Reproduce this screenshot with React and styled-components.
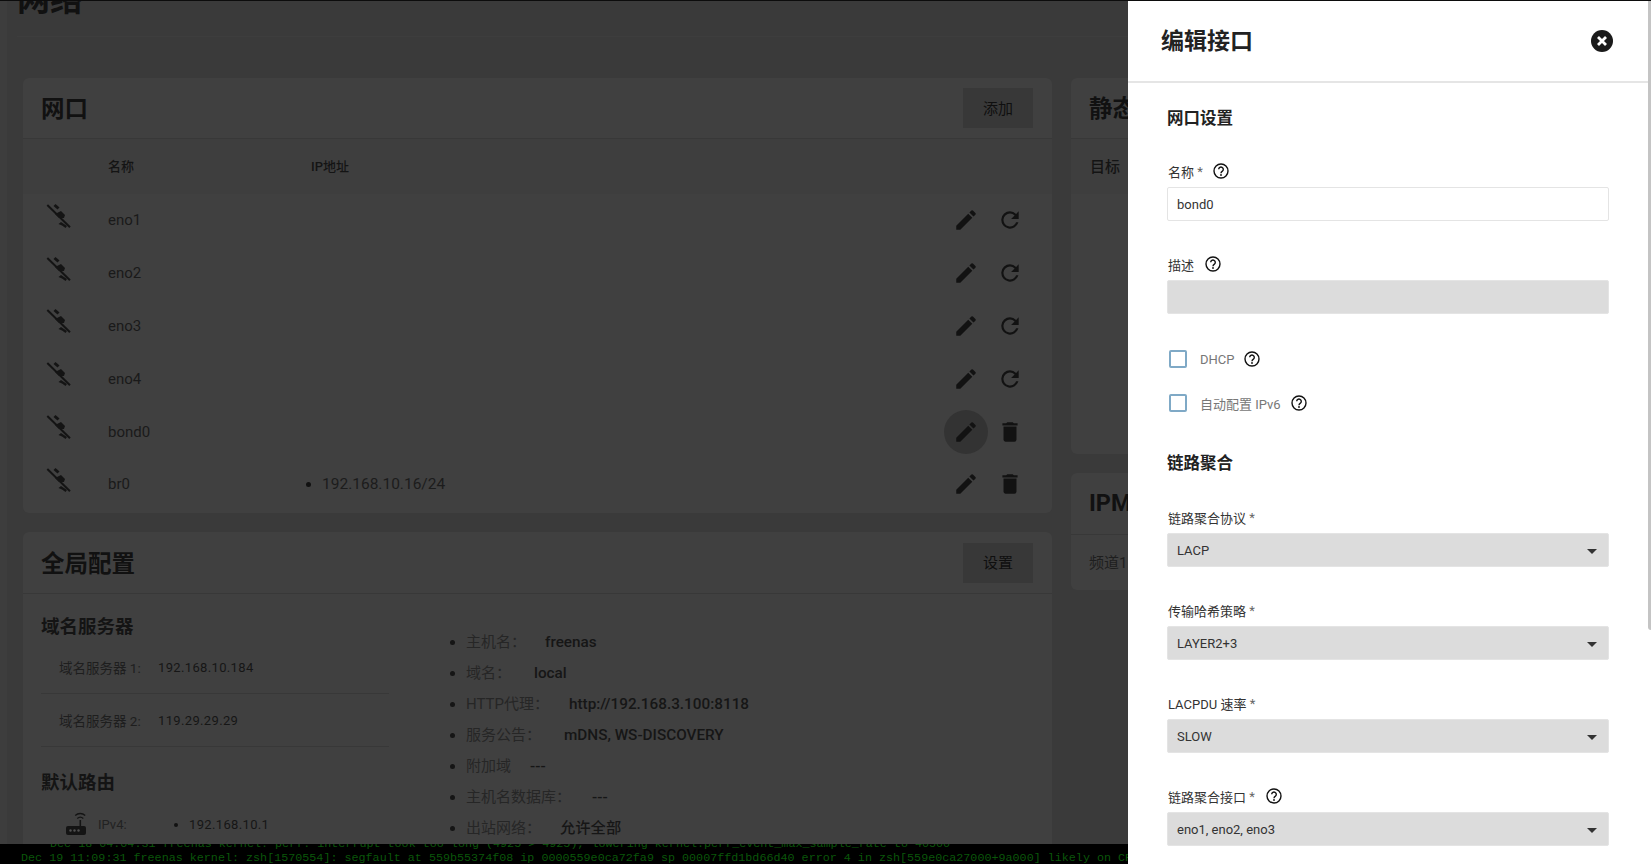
import React from "react";
import styled, { createGlobalStyle } from "styled-components";

const CN = `Roboto, "Noto Sans CJK SC", sans-serif`;

const interfaces = [
  { name: "eno1", action: "reset" },
  { name: "eno2", action: "reset" },
  { name: "eno3", action: "reset" },
  { name: "eno4", action: "reset" },
  { name: "bond0", action: "delete", hover: true },
  { name: "br0", action: "delete", ip: "192.168.10.16/24" },
];

const settings = [
  { label: "主机名：", value: "freenas", w: 79 },
  { label: "域名：", value: "local", w: 68 },
  { label: "HTTP代理：", value: "http://192.168.3.100:8118", w: 103 },
  { label: "服务公告：", value: "mDNS, WS-DISCOVERY", w: 98 },
  { label: "附加域", value: "---", w: 64 },
  { label: "主机名数据库：", value: "---", w: 126 },
  { label: "出站网络：", value: "允许全部", w: 94 },
];

const selects = [
  { label: "传输哈希策略", value: "LAYER2+3" },
  { label: "LACPDU 速率", value: "SLOW" },
  { label: "链路聚合接口", value: "eno1, eno2, eno3", help: true },
];

const Pencil = () => (
  <svg width="26" height="26" viewBox="0 0 24 24" fill="#121212">
    <path d="M3 17.25V21h3.75L17.81 9.94l-3.75-3.75L3 17.25zM20.71 7.04a1 1 0 0 0 0-1.41l-2.34-2.34a1 1 0 0 0-1.41 0l-1.83 1.83 3.75 3.75 1.83-1.83z" />
  </svg>
);
const Reset = () => (
  <svg width="26" height="26" viewBox="0 0 24 24" fill="#121212">
    <path d="M17.65 6.35A7.96 7.96 0 0 0 12 4a8 8 0 1 0 7.73 10h-2.08A6 6 0 1 1 12 6c1.66 0 3.14.69 4.22 1.78L13 11h7V4l-2.35 2.35z" />
  </svg>
);
const Trash = () => (
  <svg width="26" height="26" viewBox="0 0 24 24" fill="#121212">
    <path d="M6 19c0 1.1.9 2 2 2h8a2 2 0 0 0 2-2V7H6v12zM19 4h-3.500l-1-1h-5l-1 1H5v2h14V4z" />
  </svg>
);
const PlugOff = () => (
  <svg width="26" height="26" viewBox="0 0 26 26" fill="#141414">
    <path d="M1.300 2 24 24.300" stroke="#141414" strokeWidth="2" fill="none" />
    <path d="M7.500 3 9.500 1l4 3.500-2 2z" />
    <path d="M9 11l6-3 4 4-1 3h-5z" />
    <path d="M12.500 21 15 19l6 4-1.500 2-3.500-2.500z" />
  </svg>
);
const Router = () => (
  <svg width="22" height="24" viewBox="0 0 22 24" fill="#141414">
    <rect x="1" y="14" width="20" height="9" rx="2" />
    <rect x="14.500" y="8" width="1.600" height="6" />
    <circle cx="5.500" cy="18.500" r="1.200" fill="#505050" />
    <circle cx="9.500" cy="18.500" r="1.200" fill="#505050" />
    <circle cx="13.500" cy="18.500" r="1.200" fill="#505050" />
    <path d="M12.300 6.400a4.500 4.500 0 0 1 6 0M10.200 3.400a7.500 7.500 0 0 1 10 0" fill="none" stroke="#141414" strokeWidth="1.300" />
  </svg>
);
const Help = () => (
  <svg width="16" height="16" viewBox="0 0 16 16">
    <circle cx="8" cy="8" r="7" fill="none" stroke="#111" strokeWidth="1.400" />
    <path d="M5.700 6.300a2.300 2.300 0 1 1 3.700 1.900c-.9.600-1.400 1-1.400 2.100" fill="none" stroke="#111" strokeWidth="1.400" />
    <circle cx="8" cy="12" r=".9" fill="#111" />
  </svg>
);
const CloseCircle = () => (
  <svg width="22" height="22" viewBox="0 0 22 22">
    <circle cx="11" cy="11" r="11" fill="#1a1a1a" />
    <path d="M7 7l8 8M15 7l-8 8" stroke="#fff" strokeWidth="2.800" />
  </svg>
);

const Select = ({ label, value, help, top }) => (
  <Field $top={top}>
    <Label>
      {label} <Star>*</Star>
      {help && <HelpSlot $gap={11}><Help /></HelpSlot>}
    </Label>
    <SelectBox>
      {value}
      <Caret />
    </SelectBox>
  </Field>
);

export default function App() {
  return (
    <Shell>
      <GlobalStyle />
      <Page>
        <Rail />
        <Main>
          <PageTitle>网络</PageTitle>
          <Columns>
            <LeftColumn>
              <Card $h={435}>
                <CardHeader>
                  <CardTitle>网口</CardTitle>
                  <ActionButton>添加</ActionButton>
                </CardHeader>
                <TableHead>
                  <HeadCell $w={85} />
                  <HeadCell $w={203}>名称</HeadCell>
                  <HeadCell>IP地址</HeadCell>
                </TableHead>
                {interfaces.map(row => (
                  <Row key={row.name}>
                    <StateIcon><PlugOff /></StateIcon>
                    <NameCell>{row.name}</NameCell>
                    <IpCell>{row.ip && <IpItem>{row.ip}</IpItem>}</IpCell>
                    <RowActions>
                      <IconButton $hover={row.hover}><Pencil /></IconButton>
                      <IconButton>{row.action === "reset" ? <Reset /> : <Trash />}</IconButton>
                    </RowActions>
                  </Row>
                ))}
              </Card>
              <Card $h={320}>
                <CardHeader $h={62}>
                  <CardTitle>全局配置</CardTitle>
                  <ActionButton>设置</ActionButton>
                </CardHeader>
                <ConfigBody>
                  <ConfigLeft>
                    <SubTitle>域名服务器</SubTitle>
                    <DnsRow><DnsLabel>域名服务器 1:</DnsLabel><DnsValue>192.168.10.184</DnsValue></DnsRow>
                    <DnsRow><DnsLabel>域名服务器 2:</DnsLabel><DnsValue>119.29.29.29</DnsValue></DnsRow>
                    <SubTitle $top={23}>默认路由</SubTitle>
                    <RouteRow>
                      <Router />
                      <RouteLabel>IPv4:</RouteLabel>
                      <RouteValue>192.168.10.1</RouteValue>
                    </RouteRow>
                  </ConfigLeft>
                  <ConfigList>
                    {settings.map(s => (
                      <ConfigItem key={s.label}>
                        <ConfigLabel $w={s.w}>{s.label}</ConfigLabel>
                        <ConfigValue>{s.value}</ConfigValue>
                      </ConfigItem>
                    ))}
                  </ConfigList>
                </ConfigBody>
              </Card>
            </LeftColumn>
            <RightColumn>
              <Card $h={376}>
                <CardHeader>
                  <CardTitle>静态路由</CardTitle>
                </CardHeader>
                <TableHead>
                  <HeadCell $w={19} />
                  <HeadCell $size={15}>目标</HeadCell>
                </TableHead>
              </Card>
              <Card $h={117}>
                <CardHeader $h={62}>
                  <CardTitle>IPMI</CardTitle>
                </CardHeader>
                <ChannelRow>频道1</ChannelRow>
              </Card>
            </RightColumn>
          </Columns>
        </Main>
      </Page>
      <Terminal>
        <TermLine $indent={29}>Dec 18 04:04:31 freenas kernel: perf: interrupt took too long (4925 &gt; 4925), lowering kernel.perf_event_max_sample_rate to 40500</TermLine>
        <TermLine>Dec 19 11:09:31 freenas kernel: zsh[1570554]: segfault at 559b55374f08 ip 0000559e0ca72fa9 sp 00007ffd1bd66d40 error 4 in zsh[559e0ca27000+9a000] likely on CPU</TermLine>
      </Terminal>

      <Panel>
        <PanelHeader>
          <PanelTitle>编辑接口</PanelTitle>
          <CloseCircle />
        </PanelHeader>
        <PanelBody>
          <SectionTitle>网口设置</SectionTitle>
          <Field $top={32}>
            <Label>名称<Star> *</Star><HelpSlot $gap={10}><Help /></HelpSlot></Label>
            <TextInput>bond0</TextInput>
          </Field>
          <Field $top={35}>
            <Label>描述<HelpSlot $gap={11}><Help /></HelpSlot></Label>
            <DisabledInput />
          </Field>
          <CheckRow $top={36}>
            <CheckBox />
            <CheckText>DHCP</CheckText>
            <HelpSlot $gap={10}><Help /></HelpSlot>
          </CheckRow>
          <CheckRow $top={26}>
            <CheckBox />
            <CheckText>自动配置 IPv6</CheckText>
            <HelpSlot $gap={10}><Help /></HelpSlot>
          </CheckRow>
          <SectionTitle $top={40}>链路聚合</SectionTitle>
          <Select label="链路聚合协议" value="LACP" top={33} />
          {selects.map(s => (
            <Select key={s.label} label={s.label} value={s.value} help={s.help} top={35} />
          ))}
        </PanelBody>
        <ScrollThumb />
      </Panel>
    </Shell>
  );
}

// styled-components
const GlobalStyle = createGlobalStyle`
  html, body {
    margin: 0;
    height: 100%;
    overflow: hidden;
  }
  body {
    font-family: ${CN};
    background: #000;
  }
`;
const Shell = styled.div`
  position: relative;
  display: flex;
  flex-direction: column;
  height: 864px;
  overflow: hidden;
  border-top: 1px solid #0c0c0c;
  box-sizing: border-box;
`;
const Page = styled.div`
  flex: 1;
  display: flex;
  min-height: 0;
  overflow: hidden;
  background: #3a3a3a;
`;
const Rail = styled.div`
  width: 7px;
  flex-shrink: 0;
  background: #3d3d3d;
`;
const Main = styled.div`
  flex: 1;
  padding: 0 0 0 16px;
  min-width: 0;
`;
const PageTitle = styled.h1`
  box-sizing: border-box;
  height: 56px;
  margin: -20px 0 41px -6px;
  font-size: 33px;
  line-height: 38px;
  font-weight: 700;
  color: #111;
  border-bottom: 1px solid #3d3d3d;
`;
const Columns = styled.div`
  display: flex;
  gap: 19px;
`;
const LeftColumn = styled.div`
  width: 1029px;
  flex-shrink: 0;
  display: flex;
  flex-direction: column;
  gap: 19px;
`;
const RightColumn = styled.div`
  flex: 1;
  display: flex;
  flex-direction: column;
  gap: 19px;
`;
const Card = styled.section`
  height: ${props => props.$h}px;
  flex-shrink: 0;
  background: #404040;
  border-radius: 6px;
  overflow: hidden;
`;
const CardHeader = styled.header`
  display: flex;
  align-items: center;
  justify-content: space-between;
  box-sizing: border-box;
  height: ${props => props.$h || 61}px;
  padding: 0 19px 0 18px;
  border-bottom: 1px solid #383838;
`;
const CardTitle = styled.h2`
  margin: 0 0 2px;
  font-size: 23.5px;
  font-weight: 700;
  color: #111;
  white-space: nowrap;
`;
const ActionButton = styled.button`
  width: 70px;
  height: 40px;
  border: 0;
  border-radius: 0;
  background: #383838;
  color: #0f0f0f;
  font-family: ${CN};
  font-size: 15px;
  padding: 0 0 2px;
`;
const TableHead = styled.div`
  display: flex;
  align-items: center;
  height: 55px;
  padding-bottom: 2px;
  box-sizing: border-box;
  background: #3e3e3e;
`;
const HeadCell = styled.div`
  width: ${props => (props.$w ? `${props.$w}px` : "auto")};
  flex-shrink: 0;
  font-size: ${props => props.$size || 13}px;
  font-weight: 500;
  color: #141414;
`;
const Row = styled.div`
  display: flex;
  align-items: center;
  height: 52.8px;
  font-size: 15px;
  color: #1a1a1a;
`;
const StateIcon = styled.div`
  width: 85px;
  flex-shrink: 0;
  display: flex;
  padding: 0 0 9px 23px;
  box-sizing: border-box;
`;
const NameCell = styled.div`
  width: 192px;
  flex-shrink: 0;
`;
const IpCell = styled.ul`
  flex: 1;
  margin: 0;
  padding: 0 0 0 22px;
`;
const IpItem = styled.li`
  color: #1c1c1c;
  font-size: 15.5px;
  &::marker {
    color: #111;
  }
`;
const RowActions = styled.div`
  display: flex;
  align-items: center;
  padding-right: 20px;
`;
const IconButton = styled.div`
  width: 44px;
  height: 44px;
  display: flex;
  align-items: center;
  justify-content: center;
  border-radius: 50%;
  background: ${props => (props.$hover ? "#333" : "transparent")};
`;
const ConfigBody = styled.div`
  display: flex;
  padding: 0 18px;
`;
const ConfigLeft = styled.div`
  width: 348px;
  flex-shrink: 0;
`;
const SubTitle = styled.h3`
  margin: ${props => props.$top || 20}px 0 0;
  height: 26px;
  font-size: 18.5px;
  line-height: 26px;
  font-weight: 700;
  color: #141414;
`;
const DnsRow = styled.div`
  display: flex;
  align-items: center;
  height: 53px;
  padding-left: 18px;
  border-bottom: 1px solid #383838;
  box-sizing: border-box;
  font-size: 13px;
  &:nth-of-type(1) {
    margin-top: 1px;
  }
`;
const DnsLabel = styled.span`
  width: 99px;
  flex-shrink: 0;
  font-size: 13.5px;
  color: #1e1e1e;
`;
const DnsValue = styled.span`
  color: #161616;
  letter-spacing: 0.35px;
`;
const RouteRow = styled.div`
  display: flex;
  align-items: center;
  margin-top: 16px;
  padding-left: 24px;
  font-size: 13px;
`;
const RouteLabel = styled.span`
  width: 77px;
  margin-left: 11px;
  color: #222;
`;
const RouteValue = styled.span`
  color: #161616;
  letter-spacing: 0.35px;
  display: list-item;
  margin-left: 14px;
  &::marker {
    color: #111;
  }
`;
const ConfigList = styled.ul`
  margin: 0;
  padding: 33px 0 0 77px;
  list-style: disc;
`;
const ConfigItem = styled.li`
  height: 31px;
  line-height: 31px;
  font-size: 15px;
  white-space: nowrap;
  &::marker {
    color: #151515;
  }
`;
const ConfigLabel = styled.span`
  display: inline-block;
  width: ${props => props.$w}px;
  color: #262626;
`;
const ConfigValue = styled.span`
  color: #161616;
  font-weight: 500;
  font-size: 15.3px;
`;
const ChannelRow = styled.div`
  padding: 16px 18px;
  font-size: 15px;
  color: #1e1e1e;
`;
const Terminal = styled.div`
  height: 20px;
  flex-shrink: 0;
  overflow: hidden;
  background: #000;
  display: flex;
  flex-direction: column;
  justify-content: flex-end;
  padding: 0 0 0 21px;
  font-family: "Liberation Mono", monospace;
  font-size: 11.72px;
  line-height: 14px;
  color: #0a560a;
`;
const TermLine = styled.div`
  white-space: pre;
  flex-shrink: 0;
  padding-left: ${props => props.$indent || 0}px;
  &:last-child {
    margin-bottom: -1px;
  }
`;
const Panel = styled.aside`
  position: absolute;
  top: 0;
  right: 0;
  bottom: 0;
  width: 523px;
  background: #fff;
  color: #222;
  overflow: hidden;
`;
const PanelHeader = styled.div`
  display: flex;
  align-items: center;
  justify-content: space-between;
  box-sizing: border-box;
  height: 82px;
  padding: 0 35px 0 33px;
  margin-right: 3px;
  border-bottom: 2px solid #e5e5e5;
`;
const PanelTitle = styled.h2`
  margin: 0 0 4px;
  font-size: 23px;
  font-weight: 700;
  color: #222;
`;
const PanelBody = styled.div`
  padding: 24px 42px 0 39px;
`;
const SectionTitle = styled.h3`
  margin: ${props => props.$top || 0}px 0 0;
  height: 24px;
  font-size: 16.5px;
  line-height: 24px;
  font-weight: 700;
  color: #222;
`;
const Field = styled.div`
  margin-top: ${props => props.$top}px;
`;
const Label = styled.div`
  display: flex;
  align-items: center;
  height: 16px;
  margin-bottom: 8px;
  padding-left: 1px;
  font-size: 13px;
  color: #333;
  white-space: pre;
`;
const Star = styled.span`
  color: #666;
`;
const HelpSlot = styled.span`
  display: inline-flex;
  margin-left: ${props => props.$gap}px;
`;
const TextInput = styled.div`
  box-sizing: border-box;
  height: 34px;
  padding: 0 9px;
  display: flex;
  align-items: center;
  border: 1px solid #e4e4e4;
  border-radius: 2px;
  font-size: 13px;
  color: #333;
`;
const DisabledInput = styled(TextInput)`
  background: #dcdcdc;
`;
const SelectBox = styled(TextInput)`
  position: relative;
  background: #dcdcdc;
`;
const Caret = styled.span`
  position: absolute;
  right: 11px;
  top: 15px;
  border-left: 5.5px solid transparent;
  border-right: 5.5px solid transparent;
  border-top: 5.5px solid #333;
`;
const CheckRow = styled.div`
  display: flex;
  align-items: center;
  height: 18px;
  margin-top: ${props => props.$top}px;
  padding-left: 2px;
`;
const CheckBox = styled.span`
  box-sizing: border-box;
  width: 18px;
  height: 18px;
  border: 2px solid #7fa9c6;
  border-radius: 2px;
`;
const CheckText = styled.span`
  margin-left: 13px;
  font-size: 13px;
  color: #777;
`;
const ScrollThumb = styled.div`
  position: absolute;
  top: 0;
  right: 0;
  width: 3px;
  height: 629px;
  background: #c4c4c4;
  border-radius: 0 0 0 3px;
`;
